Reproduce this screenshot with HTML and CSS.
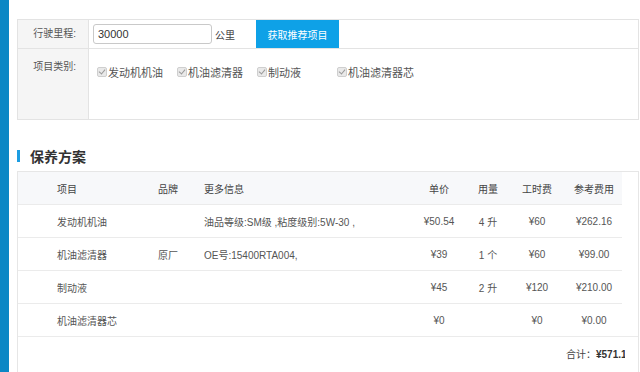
FILE: index.html
```html
<!DOCTYPE html>
<html lang="zh-CN">
<head>
  <meta charset="UTF-8" />
  <title>保养方案</title>
  <link rel="stylesheet" href="styles.css">
</head>
<body>

<div class="page">
  <aside class="side-bar"></aside>

  <main class="content">
    <div class="form-box">
      <div class="form-row first">
        <div class="form-label">行驶里程:</div>
        <div class="form-value">
          <input class="km-input" type="text" value="30000" />
          <span class="unit">公里</span>
          <button class="btn-get">获取推荐项目</button>
        </div>
      </div>
      <div class="form-row second">
        <div class="form-label">项目类别:</div>
        <div class="form-value checks">
          <label class="check-item"><span class="check"></span>发动机机油</label>
          <label class="check-item"><span class="check"></span>机油滤清器</label>
          <label class="check-item"><span class="check"></span>制动液</label>
          <label class="check-item"><span class="check"></span>机油滤清器芯</label>
        </div>
      </div>
    </div>

    <h2 class="section-title">保养方案</h2>

    <div class="plan-box">
      <table class="plan-table">
        <colgroup>
          <col style="width:140px">
          <col style="width:46px">
          <col style="width:206px">
          <col style="width:58px">
          <col style="width:40px">
          <col style="width:58px">
          <col style="width:56px">
        </colgroup>
        <thead>
          <tr>
            <th class="name">项目</th>
            <th>品牌</th>
            <th>更多信息</th>
            <th class="c">单价</th>
            <th class="c">用量</th>
            <th class="c">工时费</th>
            <th class="c">参考费用</th>
          </tr>
        </thead>
        <tbody>
          <tr>
            <td class="name">发动机机油</td>
            <td></td>
            <td>油品等级:SM级 ,粘度级别:5W-30 ,</td>
            <td class="c">¥50.54</td>
            <td class="c">4 升</td>
            <td class="c">¥60</td>
            <td class="c">¥262.16</td>
          </tr>
          <tr>
            <td class="name">机油滤清器</td>
            <td>原厂</td>
            <td>OE号:15400RTA004,</td>
            <td class="c">¥39</td>
            <td class="c">1 个</td>
            <td class="c">¥60</td>
            <td class="c">¥99.00</td>
          </tr>
          <tr>
            <td class="name">制动液</td>
            <td></td>
            <td></td>
            <td class="c">¥45</td>
            <td class="c">2 升</td>
            <td class="c">¥120</td>
            <td class="c">¥210.00</td>
          </tr>
          <tr>
            <td class="name">机油滤清器芯</td>
            <td></td>
            <td></td>
            <td class="c">¥0</td>
            <td class="c"></td>
            <td class="c">¥0</td>
            <td class="c">¥0.00</td>
          </tr>
        </tbody>
      </table>
      <div class="total-row">
        <span class="total-clip">合计：<b>¥571.16</b></span>
      </div>
    </div>
  </main>
</div>

</body>
</html>
```

FILE: styles.css
```css
html, body {
  margin: 0; padding: 0;
  font-family: 'Liberation Sans', 'Noto Sans CJK SC', sans-serif;
  background: #ffffff;
  color: #555555;
  height: 100%;
  overflow: hidden;
}

.page {
  display: flex;
  height: 100%;
}

.side-bar {
  width: 9px;
  flex: none;
  background: #0b87c5;
}

.content {
  flex: 1;
  padding: 19px 1px 0 8px;
}

/* top form */
.form-box {
  border: 1px solid #e3e3e3;
}

.form-row {
  display: grid;
  grid-template-columns: 71px 1fr;
}

.form-row.first {
  height: 28px;
  border-bottom: 1px solid #e3e3e3;
}

.form-row.second {
  height: 70px;
}

.form-label {
  background: #f5f5f5;
  border-right: 1px solid #e3e3e3;
  text-align: right;
  padding-right: 12px;
  font-size: 10px;
  color: #555;
}

.first .form-label {
  line-height: 28px;
}

.second .form-label {
  padding-top: 9px;
}

.form-value {
  display: flex;
  align-items: center;
  padding-left: 4px;
}

.km-input {
  box-sizing: border-box;
  width: 119px;
  height: 20px;
  border: 1px solid #c9c9c9;
  border-radius: 3px;
  padding: 0 4px;
  font-family: inherit;
  font-size: 11px;
  color: #333;
}

.unit {
  margin-left: 3px;
  font-size: 10px;
  color: #444;
}

.btn-get {
  align-self: stretch;
  margin-left: 21px;
  width: 83px;
  border: none;
  background: #0ea1e7;
  color: #ffffff;
  font-family: inherit;
  font-size: 10px;
  cursor: pointer;
}

.checks {
  align-items: flex-start;
  padding: 15px 0 0 8px;
}

.check-item {
  display: inline-flex;
  align-items: center;
  width: 80px;
  flex: none;
  font-size: 11px;
  color: #555;
  white-space: nowrap;
}

.check {
  position: relative;
  box-sizing: border-box;
  width: 10px;
  height: 10px;
  border: 1px solid #cfcfcf;
  border-radius: 2px;
  background: #e9e9e9;
  margin-right: 1px;
}

.check::after {
  content: "";
  position: absolute;
  left: 2px; top: 0;
  width: 3px;
  height: 5px;
  border: solid #9a9a9a;
  border-width: 0 1px 1px 0;
  transform: rotate(40deg);
}

/* section title */
.section-title {
  display: flex;
  align-items: center;
  height: 20px;
  margin: 26px 0 5px 0;
  font-size: 14px;
  font-weight: 700;
  color: #333;
}

.section-title::before {
  content: "";
  width: 3px;
  height: 12px;
  background: #1c9de2;
  margin-right: 10px;
}

/* plan table */
.plan-box {
  border: 1px solid #e6e6e6;
  height: 220px;
}

.plan-table {
  width: 604px;
  table-layout: fixed;
  border-collapse: collapse;
  font-size: 10px;
}

.plan-table th,
.plan-table td {
  height: 32px;
  padding: 0;
  text-align: left;
  font-weight: 400;
  white-space: nowrap;
  color: #555;
}

.plan-table th {
  color: #444;
}

.plan-table thead tr {
  background: #f7f8fa;
}

.plan-table tbody tr {
  border-top: 1px solid #ebebeb;
}

.plan-table .name {
  padding-left: 39px;
}

.plan-table .c {
  text-align: center;
}

.total-row {
  border-top: 1px solid #ebebeb;
  height: 32px;
  display: flex;
  align-items: center;
  justify-content: flex-end;
  padding-right: 13px;
  font-size: 10px;
  color: #444;
}

.total-clip {
  display: inline-block;
  width: 59px;
  overflow: hidden;
  white-space: nowrap;
}

.total-clip b {
  color: #333;
}
```
